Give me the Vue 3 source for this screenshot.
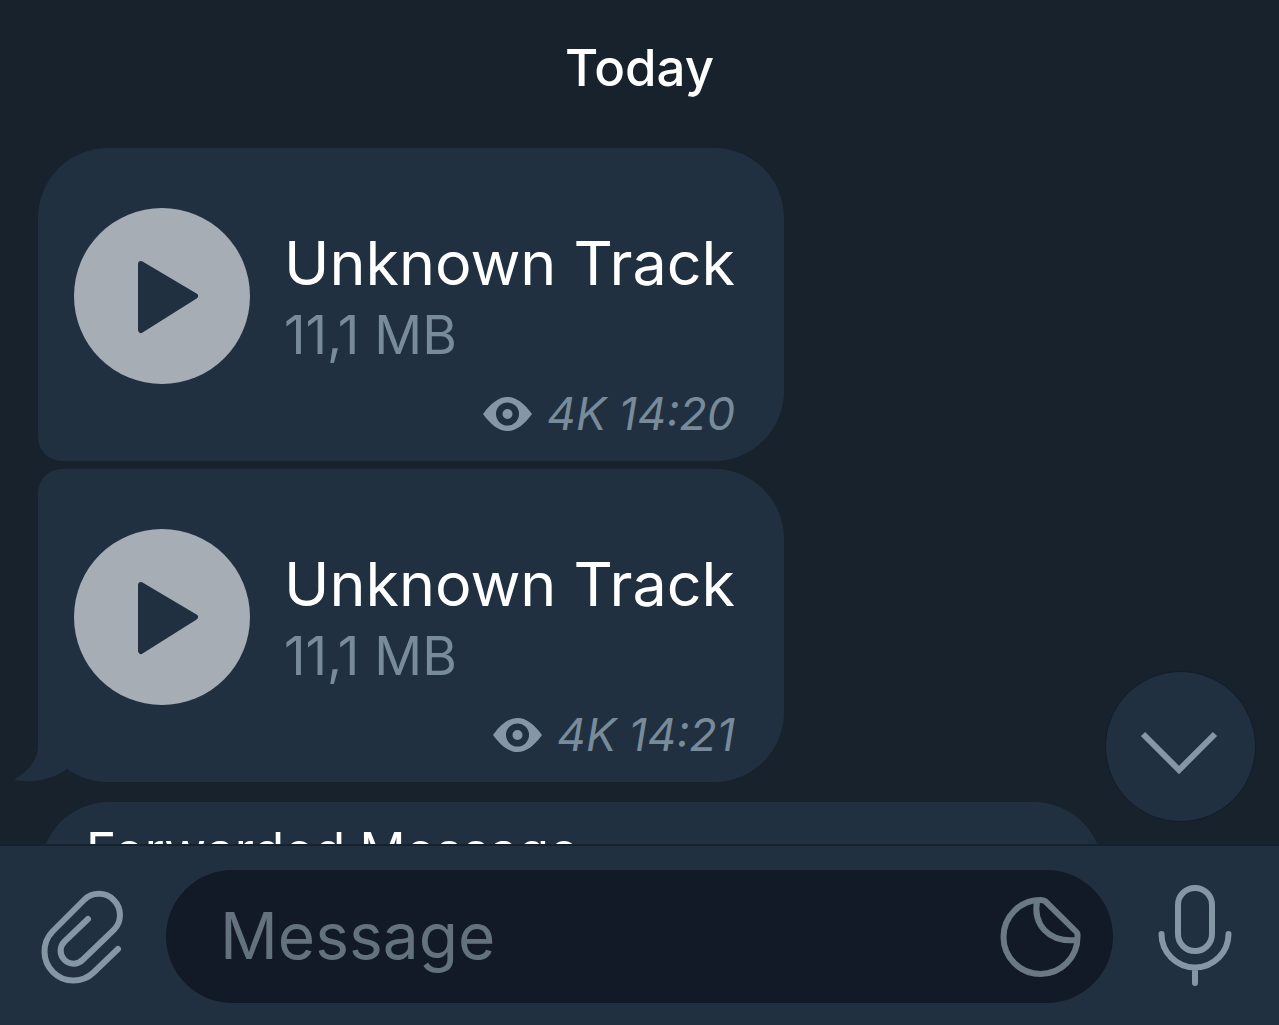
<script setup>
import { ref } from "vue";

const draft = ref("");

const tracks = [
  { id: 1, title: "Unknown Track", size: "11,1 MB", views: "4K", time: "14:20" },
  { id: 2, title: "Unknown Track", size: "11,1 MB", views: "4K", time: "14:21" },
];
</script>

<template>
  <div class="chat">
    <main class="messages">
      <p class="day">Today</p>

      <div class="group">
        <article v-for="(track, i) in tracks" :key="track.id"
                 :class="['bubble', i === 0 ? 'first' : '', i === tracks.length - 1 ? 'last' : '']">
          <div class="track">
            <button class="play" type="button" aria-label="Play">
              <svg viewBox="0 0 176 176">
                <path d="M67 56 L121 88 L67 122 Z" fill="#213040" stroke="#213040" stroke-width="6" stroke-linejoin="round" />
              </svg>
            </button>
            <div>
              <p class="title">{{ track.title }}</p>
              <p class="size">{{ track.size }}</p>
            </div>
          </div>
          <div class="meta">
            <svg class="eye" viewBox="0 0 49 34">
              <path fill-rule="evenodd" fill="currentColor"
                    d="M0 17 C8 6 16 0 24.500 0 S41 6 49 17 C41 28 33 34 24.500 34 S8 28 0 17 Z M24.500 5.500 a11.500 11.500 0 1 0 0 23 a11.500 11.500 0 1 0 0 -23 Z" />
              <circle cx="24.500" cy="17" r="5" fill="currentColor" />
            </svg>
            <span>{{ track.views }} {{ track.time }}</span>
          </div>
          <svg v-if="i === tracks.length - 1" class="tail" viewBox="0 0 70 82">
            <path fill="#213040" d="M24 0 V46 C24 60 15 70 0 80 C20 84 40 79 54 68 L70 60 V0 Z" />
          </svg>
        </article>
      </div>

      <article class="bubble forwarded">
        <p>Forwarded Message</p>
      </article>

      <button class="to_bottom" type="button" aria-label="Scroll to bottom">
        <svg viewBox="2 0 80 44">
          <path d="M4 4 L40 40 L76 4" />
        </svg>
      </button>
    </main>

    <footer class="composer">
      <button class="icon_button" type="button" aria-label="Attach file">
        <svg class="clip" viewBox="2 0 92 104">
          <path d="M83 64 L58.500 87.500 A29 29 0 0 1 17.500 46.500 L49 15 A21 21 0 0 1 78.800 44.800 L47.500 75 A12.800 12.800 0 0 1 29.500 56.500 L53 34" />
        </svg>
      </button>
      <div class="field">
        <input v-model="draft" type="text" placeholder="Message" aria-label="Message" />
        <button class="sticker" type="button" aria-label="Stickers">
          <svg viewBox="0 0 82 82">
            <path d="M40.500 4 A37 37 0 1 0 77.500 41 V38 Q77.500 37 76 35.500 L45 5 Q43.500 4 40.500 4 Z" />
            <path d="M37 5 C33 28 48 47 77 44" />
          </svg>
        </button>
      </div>
      <button class="icon_button" type="button" aria-label="Record voice message">
        <svg class="mic" viewBox="1 0 80 104">
          <rect x="23" y="3" width="34" height="63" rx="17" />
          <path d="M6.500 49 A33.500 33.500 0 0 0 73.500 49 M40 82.500 V98" />
        </svg>
      </button>
    </footer>
  </div>
</template>

<style>
body {
  margin: 0;
  background: #18222d;
}
</style>

<style scoped>
.chat {
  display: flex;
  flex-flow: column nowrap;
  height: 100vh;
  background: #18222d;
  color: #fff;
  font-family: Inter, "Liberation Sans", sans-serif;
}

p {
  margin: 0;
}

svg {
  display: block;
}

button {
  padding: 0;
  border: none;
  background: none;
  cursor: pointer;
}

.messages {
  position: relative;
  display: flex;
  flex-flow: column nowrap;
  flex: 1;
  min-height: 0;
  overflow: hidden;
  padding-left: 38px;
}

.day {
  padding: 38px 38px 50px 0;
  line-height: 60px;
  font-size: 51px;
  font-weight: 500;
  text-align: center;
}

.group {
  display: flex;
  flex-flow: column nowrap;
  align-items: flex-start;
  flex-shrink: 0;
  gap: 8px;
}

.bubble {
  position: relative;
  flex-shrink: 0;
  border-radius: 70px;
  background: #213040;
}

.group .bubble {
  padding: 60px 49px 17px 36px;
}

.group .first {
  border-bottom-left-radius: 24px;
}

.group .last {
  border-top-left-radius: 24px;
}

.track {
  display: flex;
  align-items: center;
  gap: 34px;
}

.play {
  width: 176px;
  height: 176px;
  border-radius: 50%;
  background: #a6adb5;
}

.title {
  font-size: 61px;
  line-height: 78px;
}

.size {
  color: #788b9b;
  font-size: 53px;
  line-height: 66px;
}

.meta {
  display: flex;
  align-items: center;
  justify-content: flex-end;
  gap: 15px;
  color: #788b9b;
  font-size: 45px;
  font-style: italic;
  line-height: 60px;
}

.eye {
  width: 49px;
  height: 34px;
  color: #8596a5;
}

.tail {
  position: absolute;
  left: -24px;
  bottom: 0;
  width: 70px;
  height: 82px;
}

.forwarded {
  margin: 20px 176px 0 2px;
  padding: 19px 46px 60px;
  font-size: 51px;
  line-height: 60px;
}

.to_bottom {
  position: absolute;
  right: 23px;
  bottom: 22px;
  display: flex;
  align-items: center;
  justify-content: center;
  width: 151px;
  height: 151px;
  padding-top: 10px;
  border: 1px solid #131c28;
  border-radius: 50%;
  background: #213040;
}

.to_bottom svg {
  width: 80px;
  height: 44px;
}

.to_bottom path,
.composer path,
.composer rect {
  fill: none;
  stroke: #8596a5;
  stroke-width: 6;
}

.composer path {
  stroke-linecap: round;
  stroke-linejoin: round;
}

.composer {
  display: flex;
  align-items: center;
  padding: 24px 0 22px;
  border-top: 2px solid #17212b;
  background: #213040;
}

.icon_button {
  display: flex;
  align-items: center;
  justify-content: center;
  flex: 0 0 166px;
}

.clip {
  width: 92px;
  height: 104px;
}

.mic {
  width: 80px;
  height: 104px;
}

.field {
  display: flex;
  align-items: center;
  flex: 1;
  min-width: 0;
  height: 133px;
  border-radius: 67px;
  background: #131a27;
}

.field input {
  flex: 1;
  min-width: 0;
  height: 98px;
  margin-bottom: 2px;
  padding: 0 0 0 54px;
  border: none;
  outline: none;
  background: none;
  color: #fff;
  font: inherit;
  font-size: 64px;
}

.field input::placeholder {
  color: #64727f;
  opacity: 1;
}

.sticker {
  margin-right: 31px;
}

.sticker svg {
  width: 82px;
  height: 82px;
}

.field .sticker path {
  stroke: #6b7985;
}
</style>
